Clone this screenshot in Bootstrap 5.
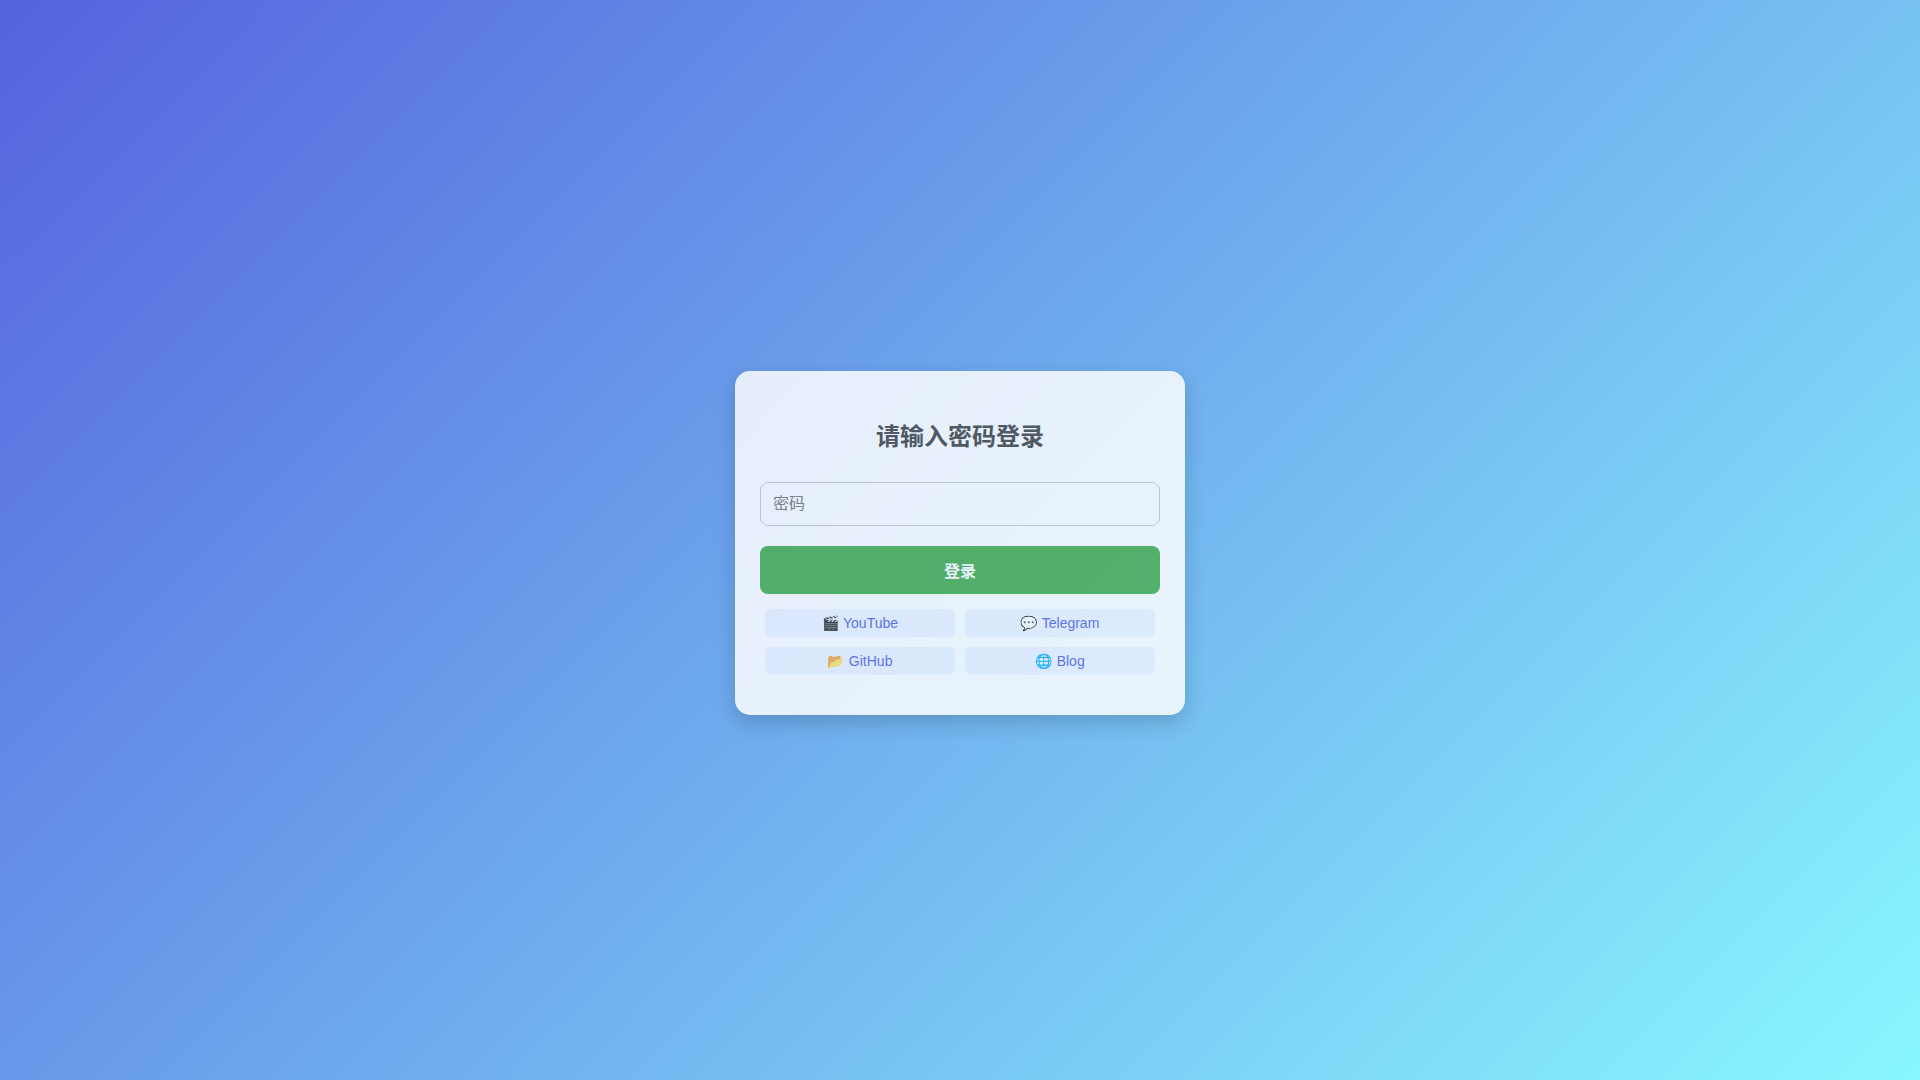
<!DOCTYPE html>
<html lang="zh-CN">
<head>
<meta charset="utf-8">
<meta name="viewport" content="width=device-width, initial-scale=1">
<title>请输入密码登录</title>
<link href="https://cdn.jsdelivr.net/npm/bootstrap@5.3.0/dist/css/bootstrap.min.css" rel="stylesheet">
<style>
  body {
    font-family: "Liberation Sans", "Noto Sans CJK SC", "Noto Color Emoji", sans-serif;
    background: linear-gradient(135deg, #5563de, #89f7fe);
  }
  .login-page { padding: 6px 0 0; }
  .login-card {
    width: 100%;
    max-width: 450px;
    padding: 47px 25px 40px;
    border: 0;
    border-radius: 15px;
    background: #fff;
    box-shadow: 0 8px 20px rgba(0, 0, 0, .2);
    opacity: .835;
  }
  .login-title { font-size: 24px; line-height: 38px; margin-bottom: 26px; color: #4a4a4a; }
  .login-input {
    height: 44px;
    padding: 0 12px;
    border: 1px solid #ccc;
    border-radius: 8px;
    font-size: 16px;
    margin-bottom: 20px;
  }
  .login-input, .login-input:focus { background: transparent; }
  .login-input::placeholder { color: #7c7c7c; }
  .login-btn {
    height: 48px;
    padding: 8px 12px 4px;
    border: 0;
    border-radius: 8px;
    font-size: 16px;
    --bs-btn-color: #fff;
    --bs-btn-bg: #4caf50;
    --bs-btn-hover-color: #fff;
    --bs-btn-hover-bg: #43a047;
  }
  .link-grid { padding: 15px 5px 0; gap: 10px; grid-template-columns: 1fr 1fr; }
  .site-link {
    height: 28px;
    line-height: 28px;
    border-radius: 6px;
    font-size: 14px;
    color: #5b68df;
    background: #f0f4ff;
  }
</style>
</head>
<body>
<main class="login-page min-vh-100 d-flex align-items-center justify-content-center">
  <form class="card login-card">
    <h1 class="login-title fw-bold text-center" id="login-title">请输入密码登录</h1>
    <input class="form-control login-input" type="password" placeholder="密码" aria-label="密码" aria-describedby="login-title">
    <button class="btn login-btn w-100 fw-bold" type="submit">登录</button>
    <nav class="link-grid d-grid" aria-label="链接">
      <a class="site-link text-center text-decoration-none" href="#">🎬 YouTube</a>
      <a class="site-link text-center text-decoration-none" href="#">💬 Telegram</a>
      <a class="site-link text-center text-decoration-none" href="#">📂 GitHub</a>
      <a class="site-link text-center text-decoration-none" href="#">🌐 Blog</a>
    </nav>
  </form>
</main>
<script src="https://cdn.jsdelivr.net/npm/bootstrap@5.3.0/dist/js/bootstrap.bundle.min.js"></script>
</body>
</html>
